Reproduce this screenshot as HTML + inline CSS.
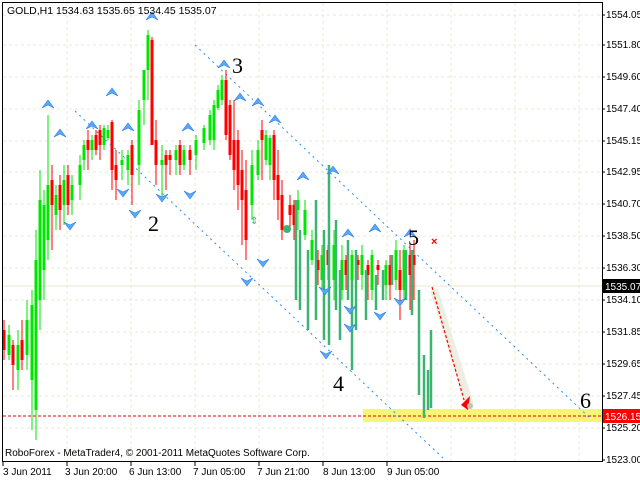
<!DOCTYPE html>
<html><head><meta charset="utf-8"><style>
html,body{margin:0;padding:0;background:#fff;width:640px;height:480px;overflow:hidden}
svg{display:block}
text{font-family:"Liberation Sans",sans-serif}
text.w{font-family:"Liberation Serif",serif;font-size:22px}
</style></head><body>
<svg width="640" height="480" viewBox="0 0 640 480" xmlns="http://www.w3.org/2000/svg">
<defs>
<path id="u" d="M0 -1L-6 7L0 4L6 7Z"/>
<path id="d" d="M0 1L-6 -7L0 -4L6 -7Z"/>
</defs>
<rect width="640" height="480" fill="#fff"/>
<g stroke="#e8e8d0" stroke-width="1" stroke-dasharray="3,3">
<path d="M3 15H602M3 45H602M3 77H602M3 109H602M3 141H602M3 172H602M3 204H602M3 236H602M3 268H602M3 300H602M3 332H602M3 364H602M3 396H602M3 428H602"/>
<path d="M67 3V461M131 3V461M195 3V461M259 3V461M323 3V461M387 3V461M451 3V461M515 3V461M579 3V461"/>
</g>
<rect x="363" y="409" width="239" height="13" fill="#f8f477"/>
<line x1="3" y1="416" x2="602" y2="416" stroke="#e00" stroke-dasharray="3,2"/>
<line x1="3" y1="286" x2="602" y2="286" stroke="#e8e8d0"/>
<g stroke="#2a8ef0" stroke-dasharray="2,4" stroke-width="1">
<line x1="195" y1="45" x2="592" y2="420"/>
<line x1="75" y1="111" x2="443" y2="458"/>
</g>
<g stroke="#f00" fill="none">
<path stroke-width="1" d="M4 320V360M13 340V390M22 320V370M52 165V250M60 175V230M68 165V215M88 130V170M96 130V155M100 125V160M112 120V190M116 150V200M132 140V205M152 37V145M156 120V185M166 150V190M170 150V175M180 140V175M190 145V175M226 70V140M230 100V160M234 100V190M238 130V210M242 150V245M246 160V260M262 120V180M274 130V200M278 150V220M282 180V240M290 195V230M294 200V240M318 250V285M328 245V280M346 255V290M358 255V280M368 260V300M378 260V285M390 255V300M400 250V320M410 245V310M414 240V300"/>
<path stroke-width="3" d="M4 330V350M13 345V365M22 340V360M52 180V205M60 185V210M68 175V205M88 140V150M96 135V150M100 130V145M112 122V170M116 165V180M132 145V175M152 40V145M156 140V165M166 155V165M170 155V160M180 145V165M190 150V160M226 80V135M230 105V155M234 140V170M238 140V185M242 170V200M246 190V240M262 130V140M274 135V180M278 175V200M282 195V230M290 205V215M294 205V225M318 260V270M328 250V265M346 260V275M358 260V265M368 265V275M378 265V270M390 265V285M400 270V290M410 255V275M414 255V265"/>
</g>
<g stroke="#00e600" fill="none">
<path stroke-width="1" d="M9 325V360M18 330V390M27 300V370M32 290V430M36 230V440M40 170V330M44 190V300M48 115V260M56 185V230M64 165V225M72 175V215M80 155V200M84 140V170M92 135V160M104 125V150M108 125V140M122 150V180M128 150V185M139 100V185M144 70V125M148 30V100M162 145V200M176 145V175M184 145V170M196 135V170M204 125V150M210 110V145M214 100V150M218 85V110M222 75V105M252 150V220M258 140V180M266 130V165M270 135V180M298 190V230M305 200V240M312 230V265M322 245V290M334 230V300M342 245V300M352 250V300M362 245V290M372 250V300M386 260V300M396 240V290M404 245V300"/>
<path stroke-width="3" d="M9 335V355M18 345V370M27 320V355M32 305V380M36 260V410M40 200V300M44 205V270M48 185V240M56 195V215M64 180V205M72 185V200M80 165V185M84 145V160M92 140V150M104 128V145M108 130V138M122 160V165M128 155V170M139 110V165M144 70V100M148 35V70M162 160V165M176 150V160M184 150V165M196 140V155M204 128V143M210 115V140M214 105V140M218 90V108M222 80V100M252 165V205M258 150V175M266 135V160M270 138V165M298 200V210M305 210V235M312 240V260M322 255V280M334 245V280M342 260V290M352 255V280M362 255V275M372 255V290M386 265V285M396 250V280M404 250V290"/>
</g>
<g stroke="#3cb371" stroke-width="2.5" fill="none">
<path d="M296 200V300M300 230V310M308 250V330M316 200V320M324 230V340M329 165V345M336 220V310M340 270V340M348 240V300M352 280V370M356 250V330M366 270V320M376 275V310M383 270V300M392 255V285M406 250V300M412 250V315M419 290V395M424 355V418M428 370V410M431 330V408"/>
</g>
<circle cx="287" cy="229" r="4" fill="#3cb371"/>
<text x="250" y="224" font-size="10" fill="#3cb371">⇕</text>
<g fill="#5aa8ff" stroke="#2a7ee0" stroke-width="0.6">
<use href="#u" x="48" y="101"/><use href="#u" x="60" y="130"/><use href="#u" x="92" y="122"/><use href="#u" x="112" y="89"/><use href="#u" x="128" y="124"/><use href="#u" x="152" y="13"/><use href="#u" x="188" y="124"/><use href="#u" x="224" y="61"/><use href="#u" x="240" y="94"/><use href="#u" x="258" y="99"/><use href="#u" x="275" y="116"/><use href="#u" x="303" y="173"/><use href="#u" x="333" y="167"/><use href="#u" x="348" y="230"/><use href="#u" x="375" y="225"/><use href="#u" x="410" y="230"/>
<use href="#d" x="70" y="229"/><use href="#d" x="123" y="196"/><use href="#d" x="135" y="217"/><use href="#d" x="162" y="201"/><use href="#d" x="190" y="198"/><use href="#d" x="247" y="285"/><use href="#d" x="263" y="266"/><use href="#d" x="325" y="294"/><use href="#d" x="350" y="313"/><use href="#d" x="380" y="319"/><use href="#d" x="400" y="305"/><use href="#d" x="326" y="358"/><use href="#d" x="350" y="331"/>
</g>
<path d="M434 290L470 405" stroke="#ecebdc" stroke-width="8" opacity="0.8"/>
<line x1="432" y1="287" x2="464" y2="400" stroke="#f00" stroke-dasharray="3,2" stroke-width="1.2"/>
<path d="M461 405L468 410L470 396Z" fill="#f00"/>
<circle cx="470" cy="406" r="3" fill="#b8c8b0"/>
<text x="431" y="245" font-size="11" fill="#f00" font-weight="bold">×</text>
<g fill="#000">
<text class="w" x="148" y="231">2</text><text class="w" x="232" y="73">3</text><text class="w" x="333" y="391">4</text><text class="w" x="408" y="245">5</text><text class="w" x="580" y="408">6</text>
</g>
<rect x="2.5" y="2.5" width="600" height="459" fill="none" stroke="#000"/>
<g font-size="10" fill="#000">
<text x="606" y="18">1554.05</text><text x="606" y="48">1551.80</text><text x="606" y="80">1549.60</text><text x="606" y="112">1547.40</text><text x="606" y="144">1545.15</text><text x="606" y="175">1542.95</text><text x="606" y="207">1540.70</text><text x="606" y="239">1538.50</text><text x="606" y="271">1536.30</text><text x="606" y="303">1534.10</text><text x="606" y="335">1531.85</text><text x="606" y="367">1529.65</text><text x="606" y="399">1527.45</text><text x="606" y="431">1525.20</text><text x="606" y="463">1523.00</text>
</g>
<g stroke="#000"><path d="M602 15h3M602 45h3M602 77h3M602 109h3M602 141h3M602 172h3M602 204h3M602 236h3M602 268h3M602 300h3M602 332h3M602 364h3M602 396h3M602 428h3M602 460h3"/></g>
<rect x="603" y="279" width="37" height="14" fill="#000"/>
<text x="605" y="290" font-size="10" fill="#fff">1535.07</text>
<rect x="603" y="409" width="37" height="14" fill="#f00"/>
<text x="605" y="420" font-size="10" fill="#fff">1526.15</text>
<g stroke="#000"><path d="M3 462v4M67 462v4M131 462v4M195 462v4M259 462v4M323 462v4M387 462v4"/></g>
<g font-size="10" fill="#000">
<text x="3" y="475">3 Jun 2011</text><text x="65" y="475">3 Jun 20:00</text><text x="129" y="475">6 Jun 13:00</text><text x="193" y="475">7 Jun 05:00</text><text x="257" y="475">7 Jun 21:00</text><text x="323" y="475">8 Jun 13:00</text><text x="387" y="475">9 Jun 05:00</text>
</g>
<text x="7" y="14" font-size="10.5" fill="#000">GOLD,H1  1534.63 1535.65 1534.45 1535.07</text>
<text x="5" y="456" font-size="10" fill="#000">RoboForex - MetaTrader4, © 2001-2011 MetaQuotes Software Corp.</text>
</svg>
</body></html>
